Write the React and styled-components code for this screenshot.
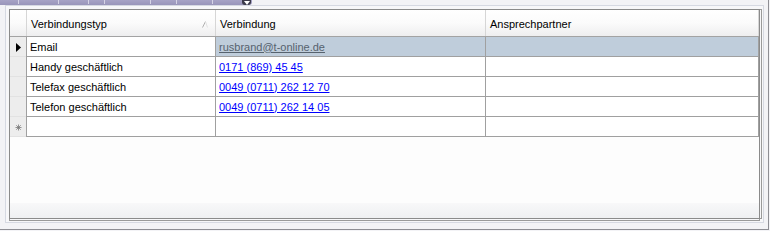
import React from 'react'
import styled, { createGlobalStyle } from 'styled-components'

const GlobalStyle = createGlobalStyle`
  html, body {
    margin: 0;
    padding: 0;
    background: #f3f3f6;
    font-family: "Liberation Sans", Arial, sans-serif;
    font-size: 11px;
    overflow: hidden;
  }
`

const rows = [
  { typ: 'Email', value: 'rusbrand@t-online.de', selected: true },
  { typ: 'Handy geschäftlich', value: '0171 (869) 45 45' },
  { typ: 'Telefax geschäftlich', value: '0049 (0711) 262 12 70' },
  { typ: 'Telefon geschäftlich', value: '0049 (0711) 262 14 05' },
]

function App() {
  return (
    <Frame>
      <GlobalStyle />
      <TopStrip>
        <Tab>
          {[18, 58, 88, 104, 150, 176, 212].map((x) => (
            <Tick key={x} style={{ left: x }} />
          ))}
          <TabArrow>
            <svg width="6" height="4" viewBox="0 0 6 4">
              <path d="M0 0 L6 0 L3 4 Z" fill="#fff" />
            </svg>
          </TabArrow>
        </Tab>
      </TopStrip>

      <Panel>
        <Grid>
          <HeaderRow>
            <IndicatorHead />
            <HeadCell $w={189}>
              Verbindungstyp
              <SortGlyph>
                <svg width="6" height="7" viewBox="0 0 6 7">
                  <path d="M0.5 6.5 L3.5 0.5" stroke="#b0b0b0" strokeWidth="1" fill="none" />
                  <path d="M3.5 0.5 L5.5 6.5" stroke="#e2e2e2" strokeWidth="1" fill="none" />
                </svg>
              </SortGlyph>
            </HeadCell>
            <HeadCell $w={270}>Verbindung</HeadCell>
            <HeadCell $grow>Ansprechpartner</HeadCell>
          </HeaderRow>

          {rows.map((r) => (
            <Row key={r.typ}>
              <Indicator>
                {r.selected && (
                  <svg width="5" height="9" viewBox="0 0 5 9">
                    <path d="M0 0 L5 4.5 L0 9 Z" fill="#000" />
                  </svg>
                )}
              </Indicator>
              <Cell $w={189}>{r.typ}</Cell>
              <Cell $w={270} $selected={r.selected}>
                <Link $selected={r.selected}>{r.value}</Link>
              </Cell>
              <Cell $grow $selected={r.selected} />
            </Row>
          ))}

          <Row>
            <Indicator>
              <svg width="7" height="7" viewBox="0 0 7 7">
                <g stroke="#777" strokeWidth="0.8">
                  <path d="M3.5 0.5 L3.5 6.5" />
                  <path d="M0.5 3.5 L6.5 3.5" />
                  <path d="M1.3 1.3 L5.7 5.7" />
                  <path d="M5.7 1.3 L1.3 5.7" />
                </g>
              </svg>
            </Indicator>
            <Cell $w={189} />
            <Cell $w={270} />
            <Cell $grow />
          </Row>

          <EmptyArea />
          <Footer />
        </Grid>
      </Panel>
    </Frame>
  )
}

const Frame = styled.div`
  width: 768px;
  height: 229px;
  border-right: 1px solid #8e8e94;
  border-bottom: 1px solid #8e8e94;
  display: flex;
  flex-direction: column;
`

const TopStrip = styled.div`
  height: 5px;
  display: flex;
`

const Tab = styled.div`
  position: relative;
  width: 252px;
  height: 5px;
  background: linear-gradient(#a7a3c6, #9995ba);
  border-bottom-right-radius: 3px;
`

const Tick = styled.span`
  position: absolute;
  top: 0;
  width: 1px;
  height: 4px;
  background: #d6d4e6;
`

const TabArrow = styled.span`
  position: absolute;
  right: 1px;
  top: 0;
  width: 9px;
  height: 5px;
  background: #3b3a4a;
  border-radius: 0 0 3px 3px;
  display: flex;
  align-items: center;
  justify-content: center;
`

const Panel = styled.div`
  margin-left: 5px;
  width: 751px;
  border: 1px solid #d6d9e2;
  padding: 3px 3px 3px 3px;
  background: #f7f7f9;
`

const Grid = styled.div`
  height: 208px;
  border: 1px solid #8b8b8b;
  box-shadow: 0 2px 0 -1px #f7f7f9, 0 2px 0 0 #9a9a9a, 2px 0 0 -1px #f7f7f9, 2px 0 0 0 #9a9a9a;
  background: #fdfdfd;
  display: flex;
  flex-direction: column;
`

const HeaderRow = styled.div`
  display: flex;
  height: 26px;
  border-bottom: 1px solid #a3a3a3;
  background: linear-gradient(#ffffff 0%, #fbfbfb 50%, #eeeeef 100%);
`

const IndicatorHead = styled.div`
  width: 16px;
  border-right: 1px solid #d6d6d6;
`

const HeadCell = styled.div`
  position: relative;
  ${(p) => (p.$grow ? 'flex: 1;' : `width: ${p.$w}px;`)}
  border-right: 1px solid #d6d6d6;
  padding-left: 4px;
  padding-top: 2px;
  display: flex;
  align-items: center;
  color: #000;
  box-sizing: border-box;
`

const SortGlyph = styled.span`
  position: absolute;
  right: 7px;
  top: 11px;
  line-height: 0;
`

const Row = styled.div`
  display: flex;
  height: 19px;
  border-bottom: 1px solid #a0a0a0;
`

const Indicator = styled.div`
  width: 16px;
  border-right: 1px solid #a0a0a0;
  background: #ededed;
  display: flex;
  align-items: center;
  justify-content: center;
  box-shadow: inset 0 -1px 0 #e2e2e2;
  margin-bottom: -1px;
`

const Cell = styled.div`
  ${(p) => (p.$grow ? 'flex: 1;' : `width: ${p.$w}px;`)}
  box-sizing: border-box;
  border-right: 1px solid #a0a0a0;
  padding-left: 3px;
  display: flex;
  align-items: center;
  background: ${(p) => (p.$selected ? '#bfcddb' : '#ffffff')};
  white-space: nowrap;
`

const Link = styled.span`
  color: ${(p) => (p.$selected ? '#56626e' : '#0000ff')};
  text-decoration: underline;
`

const EmptyArea = styled.div`
  flex: 1;
  background: #fdfdfd;
`

const Footer = styled.div`
  height: 15px;
  background: linear-gradient(#f8f8f9, #eff0f2);
`

export default App
